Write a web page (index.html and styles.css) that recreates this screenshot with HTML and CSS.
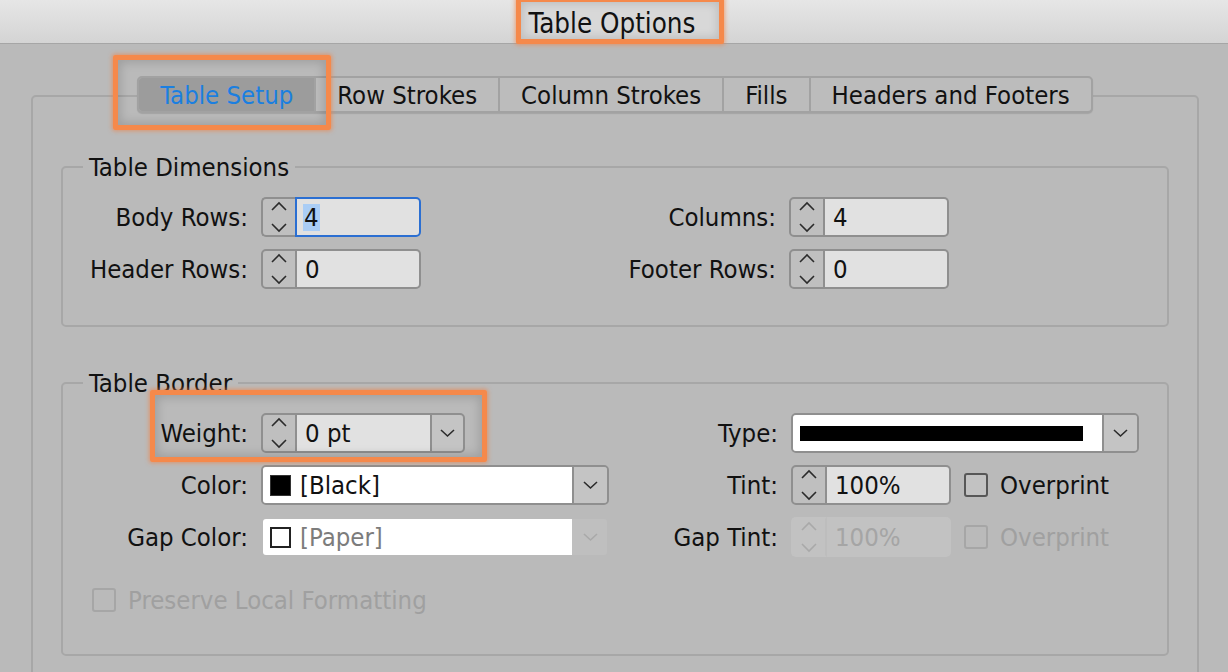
FILE: index.html
```html
<!DOCTYPE html>
<html lang="en">
<head>
<meta charset="utf-8">
<title>Table Options</title>
<link rel="stylesheet" href="styles.css">
</head>
<body>
<div class="window">
  <header class="titlebar"><span class="title">Table Options</span></header>
  <main class="content">
    <nav class="tabs">
      <div class="tab active">Table Setup</div>
      <div class="tab">Row Strokes</div>
      <div class="tab">Column Strokes</div>
      <div class="tab">Fills</div>
      <div class="tab">Headers and Footers</div>
    </nav>
    <section class="panel">
      <fieldset class="group">
        <legend>Table Dimensions</legend>
        <div class="grid dims-grid">
          <label class="lbl">Body Rows:</label>
          <div class="spin">
            <span class="step nosep"><svg width="32" height="36" viewBox="0 0 32 36"><path d="M9 11 L16 4 L23 11 M9 25 L16 32 L23 25" fill="none" stroke="#2b2b2b" stroke-width="1.6"/></svg></span>
            <span class="field focus"><span class="sel">4</span></span>
          </div>
          <label class="lbl">Columns:</label>
          <div class="spin">
            <span class="step"><svg width="32" height="36" viewBox="0 0 32 36"><path d="M9 11 L16 4 L23 11 M9 25 L16 32 L23 25" fill="none" stroke="#2b2b2b" stroke-width="1.6"/></svg></span>
            <span class="field">4</span>
          </div>
          <label class="lbl">Header Rows:</label>
          <div class="spin">
            <span class="step"><svg width="32" height="36" viewBox="0 0 32 36"><path d="M9 11 L16 4 L23 11 M9 25 L16 32 L23 25" fill="none" stroke="#2b2b2b" stroke-width="1.6"/></svg></span>
            <span class="field">0</span>
          </div>
          <label class="lbl">Footer Rows:</label>
          <div class="spin">
            <span class="step"><svg width="32" height="36" viewBox="0 0 32 36"><path d="M9 11 L16 4 L23 11 M9 25 L16 32 L23 25" fill="none" stroke="#2b2b2b" stroke-width="1.6"/></svg></span>
            <span class="field">0</span>
          </div>
        </div>
      </fieldset>

      <fieldset class="group border-group">
        <legend>Table Border</legend>
        <div class="highlight weight-hl"></div>
        <div class="grid border-grid">
          <label class="lbl">Weight:</label>
          <div class="spin combo">
            <span class="step"><svg width="32" height="36" viewBox="0 0 32 36"><path d="M9 11 L16 4 L23 11 M9 25 L16 32 L23 25" fill="none" stroke="#2b2b2b" stroke-width="1.6"/></svg></span>
            <span class="field">0 pt</span>
            <span class="drop"><svg width="31" height="36" viewBox="0 0 31 36"><path d="M9 15 L15.5 21 L22 15" fill="none" stroke="#2b2b2b" stroke-width="1.6"/></svg></span>
          </div>
          <label class="lbl">Type:</label>
          <div class="select">
            <span class="val"><span class="stroke-sample"></span></span>
            <span class="drop"><svg width="31" height="36" viewBox="0 0 31 36"><path d="M9 15 L15.5 21 L22 15" fill="none" stroke="#2b2b2b" stroke-width="1.6"/></svg></span>
          </div>

          <label class="lbl">Color:</label>
          <div class="select">
            <span class="val"><span class="swatch black"></span>[Black]</span>
            <span class="drop"><svg width="31" height="36" viewBox="0 0 31 36"><path d="M9 15 L15.5 21 L22 15" fill="none" stroke="#2b2b2b" stroke-width="1.6"/></svg></span>
          </div>
          <label class="lbl">Tint:</label>
          <div class="pair">
            <div class="spin">
              <span class="step"><svg width="32" height="36" viewBox="0 0 32 36"><path d="M9 11 L16 4 L23 11 M9 25 L16 32 L23 25" fill="none" stroke="#2b2b2b" stroke-width="1.6"/></svg></span>
              <span class="field">100%</span>
            </div>
            <span class="check"><span class="box"></span>Overprint</span>
          </div>

          <label class="lbl">Gap Color:</label>
          <div class="select disabled">
            <span class="val"><span class="swatch white"></span>[Paper]</span>
            <span class="drop"><svg width="31" height="36" viewBox="0 0 31 36"><path d="M9 15 L15.5 21 L22 15" fill="none" stroke="#a9a9a9" stroke-width="1.6"/></svg></span>
          </div>
          <label class="lbl">Gap Tint:</label>
          <div class="pair">
            <div class="spin disabled">
              <span class="step"><svg width="32" height="36" viewBox="0 0 32 36"><path d="M9 11 L16 4 L23 11 M9 25 L16 32 L23 25" fill="none" stroke="#a9a9a9" stroke-width="1.6"/></svg></span>
              <span class="field">100%</span>
            </div>
            <span class="check disabled"><span class="box"></span>Overprint</span>
          </div>
        </div>
        <div class="preserve check disabled"><span class="box"></span>Preserve Local Formatting</div>
      </fieldset>
    </section>
  </main>
</div>
</body>
</html>
```

FILE: styles.css
```css
* { box-sizing: border-box; }

html, body {
  margin: 0;
  padding: 0;
}

body {
  width: 1228px;
  height: 672px;
  overflow: hidden;
  background: #bababa;
  color: #111;
  font-family: "DejaVu Sans Condensed", "DejaVu Sans", sans-serif;
  font-stretch: condensed;
  font-size: 25.5px;
}

/* Title bar */
.titlebar {
  height: 44px;
  background: linear-gradient(#e6e6e6, #d4d4d4);
  border-bottom: 1px solid #a6a6a6;
  display: flex;
  justify-content: center;
  align-items: flex-end;
}

.title {
  font-size: 27.5px;
  height: 47px;
  margin-bottom: -1px;
  margin-left: 12px;
  padding: 4px 24px 0 8px;
  border: 5px solid #f5894b;
  border-radius: 2px;
  display: flex;
  align-items: center;
  background: #d8d8d8;
  box-shadow: 0 0 4px 1px rgba(245, 125, 60, 0.6), inset 0 0 8px 2px rgba(0, 0, 0, 0.12);
}

/* Content area */
.content {
  padding: 32px 29px 0 31px;
}

.tabs {
  position: relative;
  z-index: 2;
  display: flex;
  width: fit-content;
  margin: 0 auto -18px;
  height: 37px;
  border: 2px solid #a2a2a2;
  border-radius: 5px;
  background: #bcbcbc;
  box-shadow: 0 1px 1px rgba(0, 0, 0, 0.12);
}

.tab {
  position: relative;
  display: flex;
  align-items: center;
  padding: 0 21px;
  border-left: 2px solid #a2a2a2;
  white-space: nowrap;
}

.tab:first-child {
  border-left: 0;
}

.tab.active {
  background: #9c9c9c;
  color: #1b7fe0;
  border-radius: 3px 0 0 3px;
}

.tab.active::after {
  content: "";
  position: absolute;
  top: -23px;
  bottom: -19px;
  left: -26px;
  right: -17px;
  border: 5px solid #f5894b;
  border-radius: 2px;
  box-shadow: 0 0 4px 1px rgba(245, 125, 60, 0.6), inset 0 0 10px 3px rgba(0, 0, 0, 0.14);
}

.panel {
  position: relative;
  z-index: 1;
  height: 640px;
  border: 2px solid #a7a7a7;
  border-radius: 5px;
  padding: 55px 28px 0;
}

/* Group boxes */
.group {
  position: relative;
  margin: 0;
  min-width: 0;
  border: 2px solid #a7a7a7;
  border-radius: 5px;
  padding: 15px 0 36px;
}

.group legend {
  margin-left: 20px;
  padding: 0 6px;
  line-height: 30px;
}

.border-group {
  margin-top: 41px;
  padding-bottom: 34px;
}

.grid {
  display: grid;
  column-gap: 13px;
  row-gap: 12px;
  grid-auto-rows: 40px;
}

.dims-grid {
  grid-template-columns: 185px 160px 342px 160px;
}

.border-grid {
  grid-template-columns: 185px 348px 156px 348px;
}

.lbl {
  justify-self: end;
  align-self: center;
  white-space: nowrap;
}

/* Spinner */
.spin {
  display: flex;
  width: 160px;
  height: 40px;
}

.spin .step {
  width: 36px;
  flex: none;
  display: flex;
  align-items: center;
  justify-content: center;
  background: #bfbfbf;
  border: 2px solid #8f8f8f;
  border-radius: 5px 0 0 5px;
}

.spin .step svg { display: block; }

.spin .field {
  flex: 1;
  display: flex;
  align-items: center;
  padding-left: 8px;
  background: #e1e1e1;
  border: 2px solid #8f8f8f;
  border-left: 0;
  border-radius: 0 5px 5px 0;
}

.spin .step.nosep {
  border-right: 0;
  width: 34px;
}

.spin .field.focus {
  border: 2px solid #2b6fd2;
  padding-left: 6px;
}

.sel {
  background: #aacdf5;
  padding: 0 1px;
  line-height: 27px;
}

.spin.combo {
  width: 204px;
}

.spin.combo .field {
  border-right: 0;
  border-radius: 0;
}

.drop {
  width: 35px;
  flex: none;
  display: flex;
  align-items: center;
  justify-content: center;
  background: #c4c4c4;
}

.spin.combo .drop {
  border: 2px solid #8f8f8f;
  border-radius: 0 5px 5px 0;
}

/* Select */
.select {
  display: flex;
  width: 348px;
  height: 40px;
  border: 2px solid #8f8f8f;
  border-radius: 5px;
  overflow: hidden;
}

.select .val {
  flex: 1;
  display: flex;
  align-items: center;
  gap: 9px;
  padding-left: 7px;
  background: #fff;
}

.select .drop {
  border-left: 2px solid #8f8f8f;
}

.stroke-sample {
  width: 283px;
  height: 15px;
  background: #000;
}

.swatch {
  width: 21px;
  height: 21px;
  flex: none;
}

.swatch.black {
  background: #000;
  border: 1px solid #333;
}

.swatch.white {
  background: #fff;
  border: 2px solid #222;
}

.select.disabled {
  border-color: transparent;
}

.select.disabled .val {
  color: #7c7c7c;
}

.select.disabled .drop {
  background: #bfbfbf;
  border-left-color: transparent;
}

/* Disabled spinner */
.spin.disabled .step,
.spin.disabled .field {
  background: #c2c2c2;
  border-color: #c2c2c2;
}

.spin.disabled .step {
  border-right-color: #bdbdbd;
}

.spin.disabled .field {
  color: #a5a5a5;
}

/* Checkbox */
.pair {
  display: flex;
  align-items: center;
  gap: 13px;
}

.check {
  display: flex;
  align-items: center;
  gap: 12px;
  white-space: nowrap;
}

.check .box {
  width: 24px;
  height: 24px;
  flex: none;
  border: 2px solid #575757;
  border-radius: 3px;
  background: #c2c2c2;
}

.check.disabled {
  color: #a0a0a0;
}

.check.disabled .box {
  border-color: #a6a6a6;
  background: transparent;
}

.preserve {
  margin: 23px 0 0 29px;
  height: 40px;
}

/* Annotation highlight */
.highlight {
  position: absolute;
  border: 5px solid #f5894b;
  border-radius: 2px;
  box-shadow: 0 0 4px 1px rgba(245, 125, 60, 0.6), inset 0 0 10px 3px rgba(0, 0, 0, 0.14);
  pointer-events: none;
}

.weight-hl {
  left: 87px;
  top: -8px;
  width: 337px;
  height: 72px;
}
```
